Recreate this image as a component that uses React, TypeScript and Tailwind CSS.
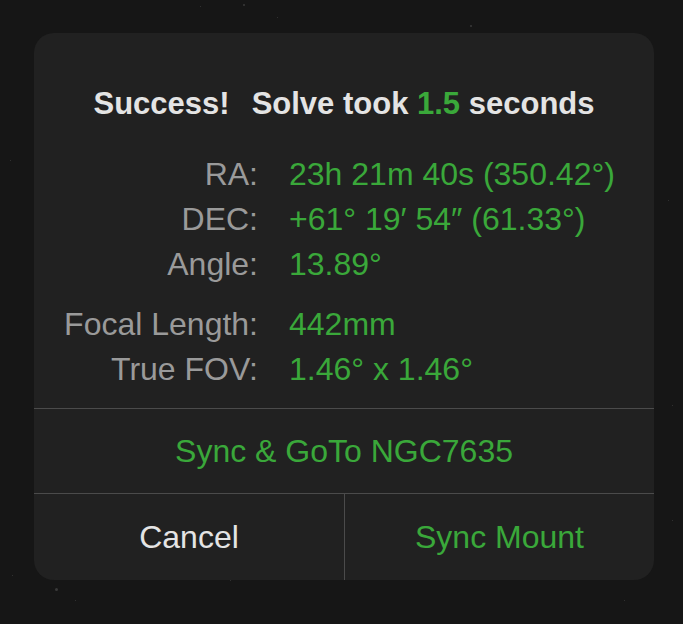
import React from 'react';

/** Solved plate field rows, split in two groups */
const coords = [
  { label: 'RA:', value: '23h 21m 40s (350.42°)' },
  { label: 'DEC:', value: '+61° 19′ 54″ (61.33°)' },
  { label: 'Angle:', value: '13.89°' },
];
const optics = [
  { label: 'Focal Length:', value: '442mm' },
  { label: 'True FOV:', value: '1.46° x 1.46°' },
];

/** Faint background stars */
const stars = [
  { x: 243, y: 4, s: 2 },
  { x: 200, y: 6, s: 1 },
  { x: 277, y: 17, s: 1 },
  { x: 470, y: 25, s: 2 },
  { x: 10, y: 160, s: 1 },
  { x: 668, y: 200, s: 1 },
  { x: 672, y: 405, s: 1 },
  { x: 55, y: 588, s: 3 },
  { x: 75, y: 600, s: 1 },
  { x: 230, y: 580, s: 1 },
  { x: 624, y: 600, s: 1 },
  { x: 672, y: 520, s: 1 },
  { x: 12, y: 575, s: 1 },
];

function Row({ label, value }: { label: string; value: string }) {
  return (
    <div className="grid grid-cols-[224px_1fr] gap-x-[31px] leading-[45px]">
      <span className="text-right text-[#9a9a9a]">{label}</span>
      <span className="text-[#3aa83a]">{value}</span>
    </div>
  );
}

export default function App() {
  return (
    <div
      className="relative w-[683px] h-[624px] overflow-hidden bg-[#161616] pt-[33px] pl-[34px]"
      style={{ fontFamily: '"Liberation Sans", Arial, sans-serif' }}
    >
      {stars.map((st, i) => (
        <span
          key={i}
          className="absolute rounded-full bg-[#3a3a3a]"
          style={{ left: st.x, top: st.y, width: st.s, height: st.s }}
        />
      ))}

      <div className="relative w-[620px] h-[547px] rounded-[20px] bg-[#212121] flex flex-col">
        {/* Title */}
        <div className="pt-[51px] text-center text-[31px] leading-[40px] font-bold text-[#e4e4e4]">
          Success!<span className="inline-block w-[22px]" />Solve took{' '}
          <span className="text-[#3aa83a]">1.5</span> seconds
        </div>

        {/* Result rows */}
        <div className="mt-[28px] text-[32px]">
          {coords.map((r) => (
            <Row key={r.label} {...r} />
          ))}
          <div className="h-[15px]" />
          {optics.map((r) => (
            <Row key={r.label} {...r} />
          ))}
        </div>

        {/* Actions */}
        <div className="mt-auto text-[32px]">
          <div className="h-[85px] border-t border-[#4b4b4b] flex items-center justify-center text-[#3aa83a]">
            Sync &amp; GoTo NGC7635
          </div>
          <div className="h-[87px] border-t border-[#4b4b4b] grid grid-cols-2">
            <div className="flex items-center justify-center text-[#e4e4e4]">Cancel</div>
            <div className="flex items-center justify-center border-l border-[#4b4b4b] text-[#3aa83a]">
              Sync Mount
            </div>
          </div>
        </div>
      </div>
    </div>
  );
}
